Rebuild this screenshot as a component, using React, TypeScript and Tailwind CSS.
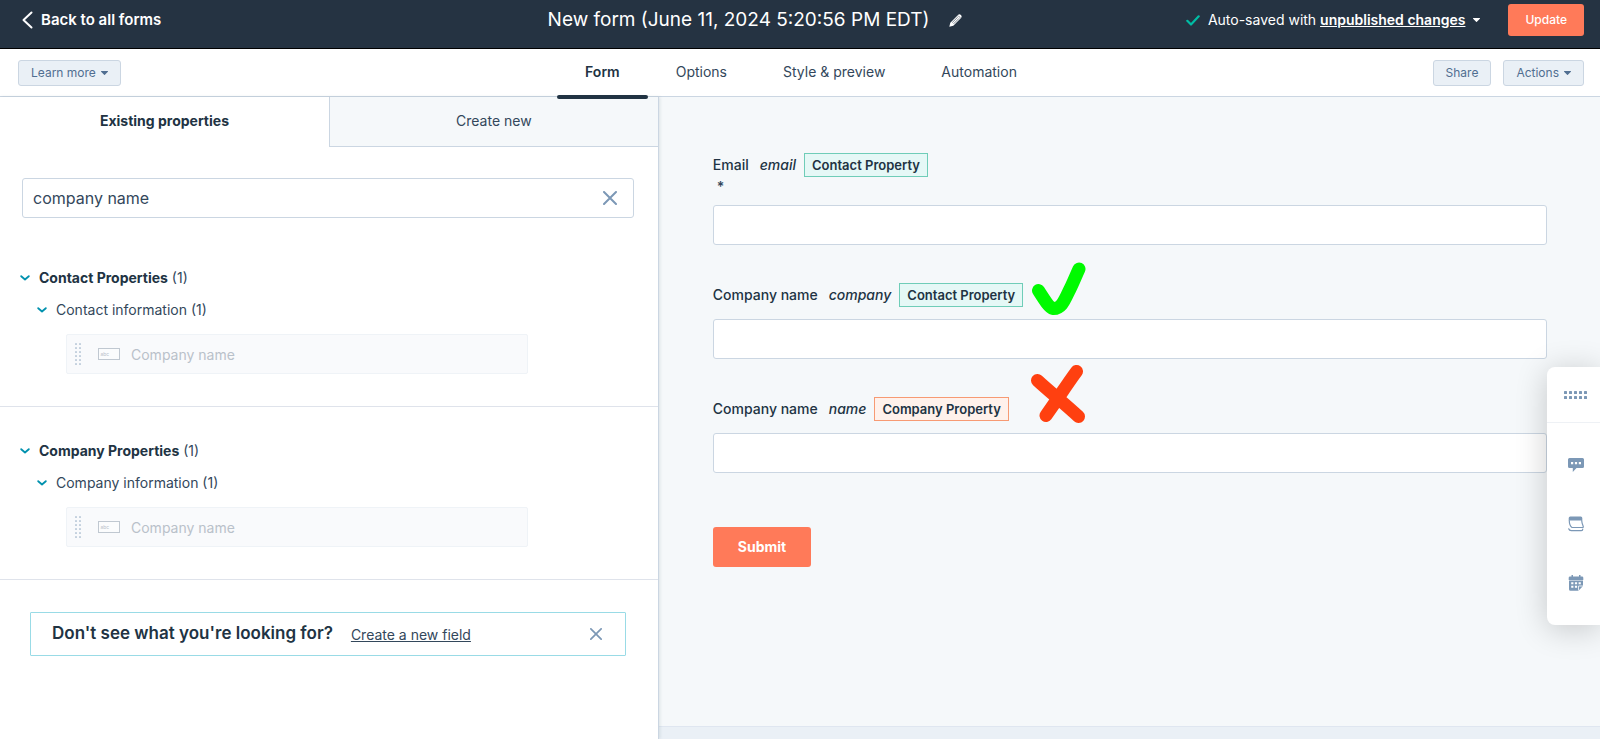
import clsx from "clsx";

const navTabs = ["Form", "Options", "Style & preview", "Automation"];

const propertyGroups = [
  { title: "Contact Properties", section: "Contact information", field: "Company name" },
  { title: "Company Properties", section: "Company information", field: "Company name" },
];

const formFields = [
  { id: "email", label: "Email", name: "email", kind: "contact", required: true, mark: "" },
  { id: "company", label: "Company name", name: "company", kind: "contact", required: false, mark: "check" },
  { id: "name", label: "Company name", name: "name", kind: "company", required: false, mark: "cross" },
];

const badgeStyles: Record<string, { text: string; style: string }> = {
  contact: { text: "Contact Property", style: "border-[#6fcdb8] bg-[#e5f8f6]" },
  company: { text: "Company Property", style: "border-[#f79a73] bg-[#fff1eb]" },
};

function Caret() {
  return (
    <svg width="7" height="4" viewBox="0 0 7 4" fill="currentColor" aria-hidden="true">
      <path d="M0.4 0h6.2a.4.4 0 0 1 .3.7L3.9 3.8a.6.6 0 0 1-.8 0L.1.7A.4.4 0 0 1 .4 0z" />
    </svg>
  );
}

function Chevron() {
  return (
    <svg width="10" height="6" viewBox="0 0 10 6" fill="none" stroke="#0091ae" strokeWidth="1.8" strokeLinecap="round" strokeLinejoin="round" aria-hidden="true">
      <path d="M1.2 1.2 5 4.5l3.8-3.3" />
    </svg>
  );
}

function CloseIcon({ size }: { size: number }) {
  return (
    <svg width={size} height={size} viewBox="0 0 14 14" fill="none" stroke="#7c98b6" strokeWidth="2" strokeLinecap="round" aria-hidden="true">
      <path d="m1 1 12 12M13 1 1 13" />
    </svg>
  );
}

function DotGrid({ cols, rows, step, size, color }: { cols: number; rows: number; step: number; size: number; color: string }) {
  const dots = Array.from({ length: cols * rows }, (_, i) => [i % cols, Math.floor(i / cols)]);
  return (
    <svg width={(cols - 1) * step + size} height={(rows - 1) * step + size} fill={color} aria-hidden="true">
      {dots.map(([x, y]) => (
        <rect key={`${x}-${y}`} x={x * step} y={y * step} width={size} height={size} rx="0.6" />
      ))}
    </svg>
  );
}

function CheckMark() {
  return (
    <svg className="absolute left-full -top-[22px] ml-[10px]" width="54" height="54" viewBox="0 0 54 54" fill="none" stroke="#00fa00" strokeWidth="13" strokeLinecap="round" strokeLinejoin="round" aria-label="Correct">
      <path d="M6.5 28.5C12 37 17 45.500 21 46.500C30 47 33 37 38 27C41 21 44 13.500 47 7" />
    </svg>
  );
}

function CrossMark() {
  return (
    <svg className="absolute left-full -top-[33px] ml-[23px]" width="55" height="58" viewBox="0 0 55 58" fill="none" stroke="#ff4010" strokeWidth="13" strokeLinecap="round" aria-label="Wrong">
      <path d="M6.500 15.500C19 27 34 39 47.500 51.500M45.500 6.500C34 22 27 34 15 50.500" />
    </svg>
  );
}

function TopBar() {
  return (
    <header className="grid h-[49px] grid-cols-[1fr_auto_1fr] items-center border-b border-black bg-[#253342] pr-4 pb-2 pl-[22px] text-white">
      <a href="#forms" className="flex items-center gap-2 text-[15px] leading-5 font-semibold">
        <svg width="11" height="18" viewBox="0 0 11 18" fill="none" stroke="currentColor" strokeWidth="2" strokeLinecap="round" strokeLinejoin="round" aria-hidden="true">
          <path d="M9.500 1.500 1.500 9l8 7.500" />
        </svg>
        Back to all forms
      </a>
      <div className="flex items-center gap-5 pr-24">
        <h1 className="text-[19px] leading-6">New form (June 11, 2024 5:20:56 PM EDT)</h1>
        <button type="button" aria-label="Rename form">
          <svg width="13" height="13" viewBox="0 0 13 13" aria-hidden="true">
            <path d="M.3 12.700 1.300 8.700 9 1C10 0 11 .2 11.900 1.100S13 3 12 4L4.300 11.700z" fill="#fff" />
            <path d="m3.200 8.600 5.600-5.600M4.500 9.900l5.600-5.600M9.200 1.700l2.200 2.200" stroke="#253342" strokeWidth=".6" />
          </svg>
        </button>
      </div>
      <div className="flex items-center justify-end gap-7">
        <div className="flex items-center gap-2 text-[14px] leading-5">
          <svg width="14" height="11" viewBox="0 0 14 11" fill="none" stroke="#00bda5" strokeWidth="2.200" strokeLinecap="round" strokeLinejoin="round" aria-hidden="true">
            <path d="m1.300 5.800 3.700 3.700 7.700-8.200" />
          </svg>
          <span>
            Auto-saved with{" "}
            <a href="#changes" className="font-semibold underline">
              unpublished changes
            </a>
          </span>
          <Caret />
        </div>
        <button type="button" className="h-8 rounded-[3px] bg-[#ff7a59] px-[17px] text-[12px] font-medium">
          Update
        </button>
      </div>
    </header>
  );
}

function ToolButton({ label, caret }: { label: string; caret?: boolean }) {
  return (
    <button type="button" className="flex h-[26px] items-center gap-[5px] rounded-[3px] border border-[#cbd6e2] bg-[#eaf0f6] px-3 text-[12px] text-[#506e91]">
      {label}
      {caret && <Caret />}
    </button>
  );
}

function NavBar() {
  return (
    <div className="grid h-12 grid-cols-[1fr_auto_1fr] border-b border-[#cbd6e2] bg-white pr-4 pl-[18px]">
      <div className="flex items-center">
        <ToolButton label="Learn more" caret />
      </div>
      <nav className="flex">
        {navTabs.map((tab, i) => (
          <a
            key={tab}
            href={`#tab-${i}`}
            className={clsx(
              "relative px-7 pt-[13px] text-[14px] leading-5",
              i === 0 ? "font-semibold text-[#213343]" : "text-[#33475b]"
            )}
          >
            {tab}
            {i === 0 && <span className="absolute inset-x-0 -bottom-[3px] z-10 h-1 rounded-full bg-[#213343]" />}
          </a>
        ))}
      </nav>
      <div className="flex items-center justify-end gap-3">
        <ToolButton label="Share" />
        <ToolButton label="Actions" caret />
      </div>
    </div>
  );
}

function PropertyGroup({ title, section, field }: { title: string; section: string; field: string }) {
  return (
    <section className="border-b border-[#dfe3eb] pb-8 pl-5">
      <button type="button" className="flex items-center gap-[9px] text-[14px] leading-5 text-[#33475b]">
        <Chevron />
        <span>
          <b className="font-bold text-[#213343]">{title}</b> (1)
        </span>
      </button>
      <button type="button" className="mt-3 ml-[17px] flex items-center gap-[9px] text-[14px] leading-5 text-[#33475b]">
        <Chevron />
        {section} (1)
      </button>
      <div className="mt-[14px] mr-[130px] ml-[46px] flex h-10 items-center rounded-[2px] border border-[#eff3f7] bg-[#f9fafc] pl-2 text-[14px] text-[#b9c1ca]">
        <DotGrid cols={2} rows={6} step={4} size={2} color="#c4d0de" />
        <svg className="mr-[11px] ml-[17px]" width="22" height="12" viewBox="0 0 22 12" aria-hidden="true">
          <rect x=".5" y=".5" width="21" height="11" fill="#fbfcfd" stroke="#c0c8d1" />
          <text x="2.500" y="7.500" fontSize="5" fill="#b9c1ca">abc</text>
        </svg>
        {field}
      </div>
    </section>
  );
}

function PropertiesPanel() {
  return (
    <aside className="relative border-r border-[#cbd6e2] bg-white shadow-[1px_0_3px_rgba(45,62,80,0.12)]">
      <div className="grid h-[50px] grid-cols-2 text-[14px]">
        <button type="button" className="pb-[3px] font-bold text-[#213343]">
          Existing properties
        </button>
        <button type="button" className="border-b border-l border-[#cbd6e2] bg-[#f5f8fa] pb-[3px] text-[#33475b]">
          Create new
        </button>
      </div>
      <div className="mt-[31px] mr-6 mb-[50px] ml-[22px] flex h-10 items-center rounded-[3px] border border-[#cbd6e2] pr-4 pl-[10px]">
        <input
          type="text"
          aria-label="Search properties"
          defaultValue="company name"
          className="min-w-0 flex-1 text-[16px] text-[#33475b] outline-none"
        />
        <button type="button" aria-label="Clear search">
          <CloseIcon size={14} />
        </button>
      </div>
      <div className="flex flex-col gap-[34px]">
        {propertyGroups.map((group) => (
          <PropertyGroup key={group.title} {...group} />
        ))}
      </div>
      <div className="mt-8 mr-8 ml-[30px] flex h-11 items-center rounded-[1px] border border-[#99dbe6] pr-[23px] pl-[21px]">
        <p className="text-[17px] font-semibold text-[#213343]">Don't see what you're looking for?</p>
        <a href="#new-field" className="ml-[18px] text-[14px] text-[#33475b] underline">
          Create a new field
        </a>
        <button type="button" aria-label="Dismiss" className="ml-auto">
          <CloseIcon size={12} />
        </button>
      </div>
    </aside>
  );
}

function FormPreview() {
  return (
    <main className="flex flex-col">
      <form className="flex-1 pt-14 pr-[53px] pb-10 pl-[54px] text-[14px] leading-5 text-[#33475b]">
        {formFields.map(({ id, label, name, kind, required, mark }) => (
          <div key={id} className="mb-[38px]">
            <label htmlFor={id} className="flex h-6 items-center font-medium text-[#213343]">
              {label}
              <em className="mr-2 ml-[11px]">{name}</em>
              <span className={clsx("relative flex h-6 items-center border px-[7px] text-[13px] font-semibold", badgeStyles[kind].style)}>
                {badgeStyles[kind].text}
                {mark === "check" && <CheckMark />}
                {mark === "cross" && <CrossMark />}
              </span>
            </label>
            {required && <div className="h-4 pl-1 font-semibold">*</div>}
            <input id={id} type="text" className="mt-3 block h-10 w-full rounded-[3px] border border-[#cbd6e2] bg-white px-3" />
          </div>
        ))}
        <button type="submit" className="mt-4 h-10 rounded-[3px] bg-[#ff7a59] px-[25px] font-bold text-white">
          Submit
        </button>
      </form>
      <div className="h-[13px] border-t border-[#dfe6f0] bg-[#eaf0f6]" />
    </main>
  );
}

function SideDock() {
  return (
    <div className="absolute top-[367px] right-0 z-20 w-[53px] rounded-l-lg bg-white shadow-[0_4px_32px_rgba(0,0,0,0.2)]">
      <button type="button" aria-label="Drag" className="flex h-14 w-full items-center justify-center border-b border-[#eef1f5] pl-1">
        <DotGrid cols={5} rows={2} step={5} size={3} color="#7c98b6" />
      </button>
      <div className="flex flex-col items-center gap-[43px] py-[34px] pl-1">
        <button type="button" aria-label="Comments">
          <svg width="16" height="16" viewBox="0 0 16 16" aria-hidden="true">
            <path d="M1.500 1h13A1.500 1.500 0 0 1 16 2.500v7a1.500 1.500 0 0 1-1.500 1.500H8.500L4.800 15V11H1.500A1.500 1.500 0 0 1 0 9.500v-7A1.500 1.500 0 0 1 1.500 1z" fill="#7c98b6" />
            <path d="M3 5h2.200v2.200H3zM6.900 5h2.200v2.200H6.900zM10.800 5H13v2.200h-2.200z" fill="#fff" />
          </svg>
        </button>
        <button type="button" aria-label="Knowledge base">
          <svg width="16" height="16" viewBox="0 0 16 16" aria-hidden="true">
            <path d="M2.200.5h10.600a1.500 1.500 0 0 1 1.500 1.500v2.500H.7V2A1.500 1.500 0 0 1 2.200.5z" fill="#7c98b6" />
            <path d="M1.300 4.500c0 3 .5 5.500 2.700 7h10.500c.9 0 .9-.8.6-1.500-.9-2-1.300-3.500-1.400-5.500M.7 12.800c.4 1.300 1.300 1.900 2.600 1.900h10c1 0 1.500-.6 1.500-1.700" fill="none" stroke="#7c98b6" strokeWidth="1.200" strokeLinecap="round" strokeLinejoin="round" />
          </svg>
        </button>
        <button type="button" aria-label="Calendar">
          <svg width="16" height="16" viewBox="0 0 16 16" aria-hidden="true">
            <path d="M3.500 0H5v1.500h6V0h1.500v1.500H14a1.300 1.300 0 0 1 1.300 1.300V5H.7V2.800A1.300 1.300 0 0 1 2 1.500h1.500z" fill="#7c98b6" />
            <path d="M1 5.500h14V11l-4.500 4.800H2.500A1.500 1.500 0 0 1 1 14.300z" fill="#7c98b6" />
            <path d="M3.200 7.200h2.200v2H3.200zM6.900 7.200h2.200v2H6.900zM10.600 7.200h2.200v2h-2.200zM3.200 10.800h2.200v2H3.200zM6.900 10.800h2.200v2H6.900z" fill="#fff" />
            <path d="M10.500 15.500V11H15" fill="none" stroke="#fff" strokeWidth=".8" />
          </svg>
        </button>
      </div>
    </div>
  );
}

export default function App() {
  return (
    <div className="relative flex min-h-screen flex-col overflow-hidden bg-[#f5f8fa] font-[Inter,sans-serif] text-[#33475b]">
      <TopBar />
      <NavBar />
      <div className="grid flex-1 grid-cols-[7fr_10fr]">
        <PropertiesPanel />
        <FormPreview />
      </div>
      <SideDock />
    </div>
  );
}
